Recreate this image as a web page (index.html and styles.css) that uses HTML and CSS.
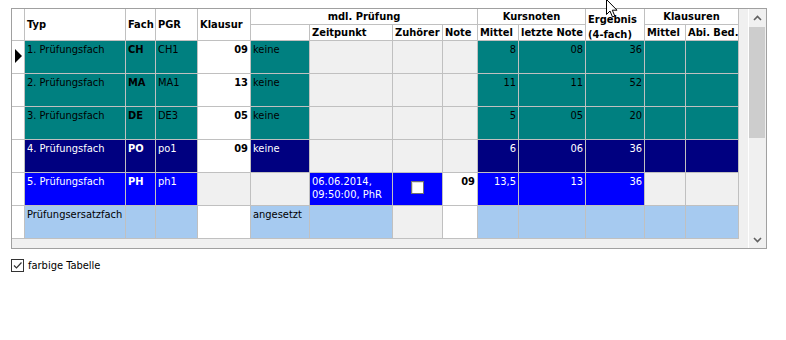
FILE: index.html
```html
<!DOCTYPE html>
<html lang="de">
<head>
  <meta charset="UTF-8">
  <title>Prüfungsfächer</title>
  <link rel="stylesheet" href="styles.css">
</head>
<body>
  <div class="box">
    <div class="grid-area">
      <div class="grid">
        <!-- Kopfzeilen -->
        <div class="h ind span2"></div>
        <div class="h span2 mid">Typ</div>
        <div class="h span2 mid">Fach</div>
        <div class="h span2 mid">PGR</div>
        <div class="h span2 mid">Klausur</div>
        <div class="h c4 center">mdl. Prüfung</div>
        <div class="h c2 center">Kursnoten</div>
        <div class="h span2 erg">Ergebnis<br>(4-fach)</div>
        <div class="h c2 center">Klausuren</div>
        <div class="h"></div>
        <div class="h">Zeitpunkt</div>
        <div class="h">Zuhörer</div>
        <div class="h">Note</div>
        <div class="h">Mittel</div>
        <div class="h">letzte Note</div>
        <div class="h">Mittel</div>
        <div class="h">Abi. Bed.</div>

        <!-- 1. Prüfungsfach -->
        <div class="ind"><span class="arrow"></span></div>
        <div class="t">1. Prüfungsfach</div>
        <div class="t bold">CH</div>
        <div class="t">CH1</div>
        <div class="w r bold">09</div>
        <div class="t">keine</div>
        <div class="g"></div>
        <div class="g"></div>
        <div class="g"></div>
        <div class="t r">8</div>
        <div class="t r">08</div>
        <div class="t r">36</div>
        <div class="t"></div>
        <div class="t"></div>

        <!-- 2. Prüfungsfach -->
        <div class="ind"></div>
        <div class="t">2. Prüfungsfach</div>
        <div class="t bold">MA</div>
        <div class="t">MA1</div>
        <div class="w r bold">13</div>
        <div class="t">keine</div>
        <div class="g"></div>
        <div class="g"></div>
        <div class="g"></div>
        <div class="t r">11</div>
        <div class="t r">11</div>
        <div class="t r">52</div>
        <div class="t"></div>
        <div class="t"></div>

        <!-- 3. Prüfungsfach -->
        <div class="ind"></div>
        <div class="t">3. Prüfungsfach</div>
        <div class="t bold">DE</div>
        <div class="t">DE3</div>
        <div class="w r bold">05</div>
        <div class="t">keine</div>
        <div class="g"></div>
        <div class="g"></div>
        <div class="g"></div>
        <div class="t r">5</div>
        <div class="t r">05</div>
        <div class="t r">20</div>
        <div class="t"></div>
        <div class="t"></div>

        <!-- 4. Prüfungsfach -->
        <div class="ind"></div>
        <div class="n">4. Prüfungsfach</div>
        <div class="n bold">PO</div>
        <div class="n">po1</div>
        <div class="w r bold">09</div>
        <div class="n">keine</div>
        <div class="g"></div>
        <div class="g"></div>
        <div class="g"></div>
        <div class="n r">6</div>
        <div class="n r">06</div>
        <div class="n r">36</div>
        <div class="n"></div>
        <div class="n"></div>

        <!-- 5. Prüfungsfach -->
        <div class="ind"></div>
        <div class="b">5. Prüfungsfach</div>
        <div class="b bold">PH</div>
        <div class="b">ph1</div>
        <div class="g"></div>
        <div class="g"></div>
        <div class="b">06.06.2014,<br>09:50:00, PhR</div>
        <div class="b box-cell"><span class="cb"></span></div>
        <div class="w r bold">09</div>
        <div class="b r">13,5</div>
        <div class="b r">13</div>
        <div class="b r">36</div>
        <div class="g"></div>
        <div class="g"></div>

        <!-- Prüfungsersatzfach -->
        <div class="ind"></div>
        <div class="s">Prüfungsersatzfach</div>
        <div class="s"></div>
        <div class="s"></div>
        <div class="w"></div>
        <div class="s">angesetzt</div>
        <div class="s"></div>
        <div class="g"></div>
        <div class="w"></div>
        <div class="s"></div>
        <div class="s"></div>
        <div class="s"></div>
        <div class="s"></div>
        <div class="s"></div>
      </div>
    </div>
    <div class="scrollbar">
      <div class="sb-btn">
        <svg width="9" height="6" viewBox="0 0 9 6"><path d="M1 5 L4.5 1.5 L8 5" fill="none" stroke="#606060" stroke-width="1.6"/></svg>
      </div>
      <div class="sb-track"><div class="sb-thumb"></div></div>
      <div class="sb-btn">
        <svg width="9" height="6" viewBox="0 0 9 6"><path d="M1 1 L4.5 4.5 L8 1" fill="none" stroke="#606060" stroke-width="1.6"/></svg>
      </div>
    </div>
  </div>

  <label class="check">
    <span class="check-box">
      <svg width="11" height="11" viewBox="0 0 11 11"><path d="M2 5.5 L4.5 8 L9.5 2.5" fill="none" stroke="#333" stroke-width="1.2"/></svg>
    </span>
    farbige Tabelle
  </label>

  <svg class="cursor" width="13" height="20" viewBox="0 0 13 20">
    <path d="M0.5 0.5 L0.5 15.5 L4 12 L6.5 18 L8.8 17 L6.3 11.2 L11 11.2 Z" fill="#fff" stroke="#000" stroke-width="1"/>
  </svg>
</body>
</html>
```

FILE: styles.css
```css
body {
  margin: 0;
  padding: 8px 0 0 11px;
  background: #fff;
  font-family: "DejaVu Sans Condensed", "DejaVu Sans", sans-serif;
  font-stretch: condensed;
  font-size: 11px;
  color: #000;
  position: relative;
  height: 340px;
  box-sizing: border-box;
}
.box {
  display: flex;
  width: 756px;
  height: 241px;
  border: 1px solid #a0a0a0;
  box-sizing: border-box;
  background: #f0f0f0;
}
.grid-area {
  flex: 1;
  border-right: 1px solid #fff;
}
.grid {
  display: grid;
  grid-template-columns: 12px 100px 29px 41px 52px 58px 82px 49px 34px 40px 66px 58px 40px 52px;
  grid-template-rows: 15px 15px repeat(6, 32px);
  gap: 1px;
  padding: 0 1px 1px 0;
  width: max-content;
  background: #c0c0c0;
}
.grid > div {
  padding: 2px 2px 0 2px;
  line-height: 13px;
  overflow: hidden;
  white-space: nowrap;
}
.h {
  background: #fff;
  font-weight: bold;
  line-height: 13px;
}
.grid > .h {
  padding: 1px 2px 0 2px;
}
.grid > .erg {
  padding-top: 3px;
  line-height: 15px;
}
.span2 {
  grid-row: span 2;
}
.grid > .mid {
  display: flex;
  align-items: center;
  padding-top: 0;
}
.c4 {
  grid-column: span 4;
}
.c2 {
  grid-column: span 2;
}
.center {
  text-align: center;
}
.ind {
  background: #fff;
  position: relative;
}
.grid > .ind {
  padding: 0;
}
.arrow {
  position: absolute;
  left: 3px;
  top: 8px;
  width: 0;
  height: 0;
  border-top: 7px solid transparent;
  border-bottom: 7px solid transparent;
  border-left: 7px solid #000;
}
.t {
  background: #008080;
}
.n {
  background: #000080;
  color: #fff;
}
.b {
  background: #0000ff;
  color: #fff;
}
.s {
  background: #a6caf0;
}
.g {
  background: #f0f0f0;
}
.w {
  background: #fff;
}
.r {
  text-align: right;
}
.bold {
  font-weight: bold;
}
.grid > .box-cell {
  display: flex;
  justify-content: center;
  padding-top: 8px;
}
.cb {
  display: block;
  width: 13px;
  height: 13px;
  box-sizing: border-box;
  background: #fff;
  border: 1px solid #707070;
  box-shadow: inset 1px 1px 0 #dcdcdc;
}
.scrollbar {
  width: 17px;
  display: flex;
  flex-direction: column;
  background: #f0f0f0;
}
.sb-btn {
  height: 17px;
  display: flex;
  align-items: center;
  justify-content: center;
}
.sb-track {
  flex: 1;
}
.sb-thumb {
  margin-top: 1px;
  height: 111px;
  background: #cdcdcd;
  margin-right: 1px;
}
.check {
  display: flex;
  align-items: center;
  gap: 4px;
  margin-top: 10px;
}
.check-box {
  width: 13px;
  height: 13px;
  box-sizing: border-box;
  border: 1px solid #333;
  display: flex;
  align-items: center;
  justify-content: center;
  background: #fff;
}
.cursor {
  position: absolute;
  left: 606px;
  top: -1px;
}
```
